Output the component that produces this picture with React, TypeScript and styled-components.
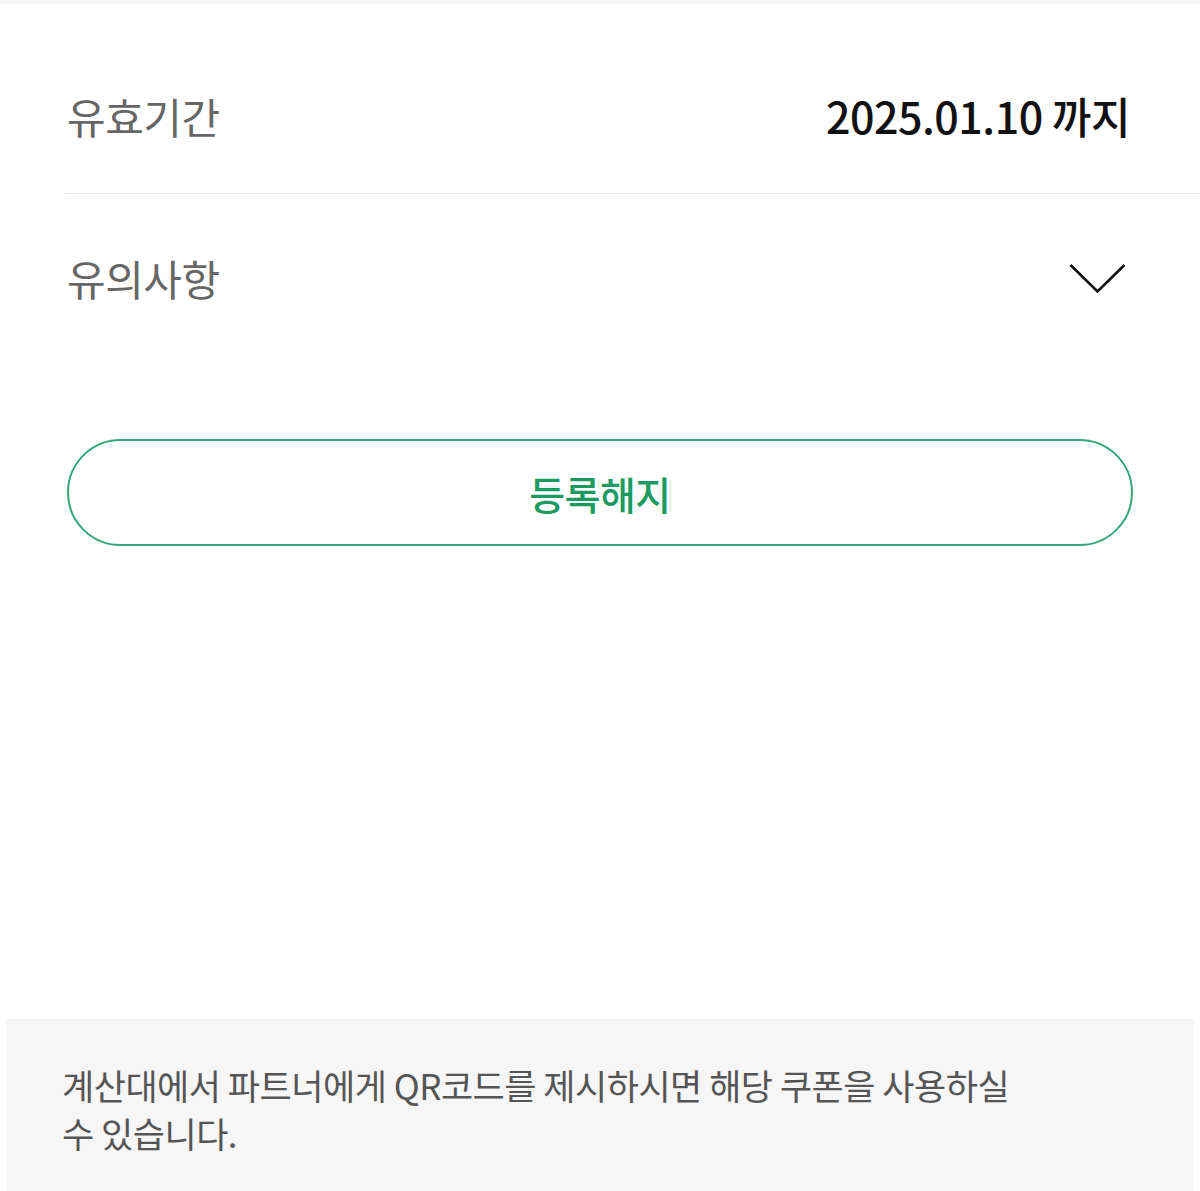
import React from 'react'
import styled, { createGlobalStyle } from 'styled-components'

const GlobalStyle = createGlobalStyle`
    html, body {
        margin: 0;
        padding: 0;
        background: #fff;
    }
    body {
        font-family: "Noto Sans CJK KR", "Noto Sans", sans-serif;
    }
`

const Page = styled.div`
    min-height: 100vh;
    display: flex;
    flex-direction: column;
    border-top: 4px solid #f4f4f4;
    box-sizing: border-box;
`

const InfoList = styled.div`
    padding-top: 33px;
`

interface RowProps {
    height: number
    divider?: boolean
}

const Row = styled.div<RowProps>`
    display: flex;
    align-items: center;
    justify-content: space-between;
    height: ${(p) => p.height}px;
    margin-left: 66px;
    padding: 0 70px 0 1px;
    border-bottom: ${(p) => (p.divider ? '1px solid #e9e9e9' : 'none')};
`

const Label = styled.span`
    font-size: 42px;
    color: #666;
    letter-spacing: -0.5px;
`

const Value = styled.span`
    font-size: 43px;
    font-weight: 500;
    color: #111;
    letter-spacing: -0.5px;
`

const ChevronButton = styled.button`
    display: flex;
    background: none;
    border: none;
    padding: 4px 0 0;
    margin-right: 3px;
    cursor: pointer;
`

const ButtonWrap = styled.div`
    padding: 79px 67px 0;
`

const CancelButton = styled.button`
    width: 100%;
    height: 107px;
    border: 2px solid #35a87a;
    border-radius: 54px;
    background: #fff;
    color: #1b9a62;
    font-family: "Noto Sans CJK KR", "Noto Sans", sans-serif;
    font-size: 39px;
    font-weight: 500;
    letter-spacing: -0.5px;
    cursor: pointer;
`

const Notice = styled.div`
    margin: auto 6px 0;
    background: #f6f6f6;
    padding: 42px 56px 34px;
`

const NoticeText = styled.p`
    margin: 0;
    max-width: 970px;
    font-size: 35px;
    line-height: 48px;
    color: #555;
    letter-spacing: -0.5px;
`

const Chevron = () => (
    <svg width="58" height="32" viewBox="0 0 58 32" fill="none">
        <polyline points="1.5,2 28.5,28.5 55.5,2" stroke="#111" strokeWidth="2.6" strokeLinejoin="miter" />
    </svg>
)

const App: React.FC = () => {
    return (
        <Page>
            <GlobalStyle />
            <InfoList>
                <Row height={156} divider>
                    <Label>유효기간</Label>
                    <Value>2025.01.10 까지</Value>
                </Row>
                <Row height={166}>
                    <Label>유의사항</Label>
                    <ChevronButton aria-label="펼치기">
                        <Chevron />
                    </ChevronButton>
                </Row>
            </InfoList>
            <ButtonWrap>
                <CancelButton>등록해지</CancelButton>
            </ButtonWrap>
            <Notice>
                <NoticeText>계산대에서 파트너에게 QR코드를 제시하시면 해당 쿠폰을 사용하실 수 있습니다.</NoticeText>
            </Notice>
        </Page>
    )
}

export default App
